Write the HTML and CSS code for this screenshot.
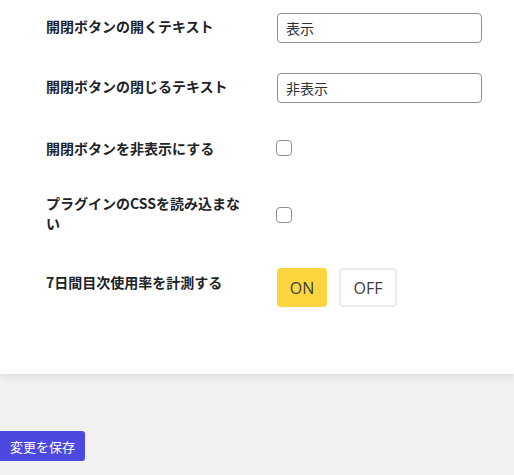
FILE: index.html
```html
<!DOCTYPE html>
<html lang="ja">
<head>
<meta charset="utf-8">
<title>設定</title>
<link rel="stylesheet" href="styles.css">
</head>
<body>
<div class="card">
  <div class="row">
    <div class="label">開閉ボタンの開くテキスト</div>
    <div class="control"><input class="text-input" type="text" value="表示"></div>
  </div>
  <div class="row">
    <div class="label">開閉ボタンの閉じるテキスト</div>
    <div class="control"><input class="text-input" type="text" value="非表示"></div>
  </div>
  <div class="row row-check">
    <div class="label">開閉ボタンを非表示にする</div>
    <div class="control"><input class="check" type="checkbox"></div>
  </div>
  <div class="row row-check row-tall">
    <div class="label">プラグインのCSSを読み込まない</div>
    <div class="control"><input class="check" type="checkbox"></div>
  </div>
  <div class="row row-toggle">
    <div class="label">7日間目次使用率を計測する</div>
    <div class="control toggle">
      <button class="tbtn on" type="button">ON</button>
      <button class="tbtn off" type="button">OFF</button>
    </div>
  </div>
</div>
<div class="footer">
  <button class="save" type="button">変更を保存</button>
</div>
</body>
</html>
```
FILE: styles.css
```css
html, body {
  margin: 0;
  padding: 0;
  background: #f1f1f1;
  font-family: "Noto Sans CJK JP", "Noto Sans", sans-serif;
  color: #1d2327;
}
.card {
  background: #fff;
  padding: 13px 0 67px 46px;
  display: flex;
  flex-direction: column;
  gap: 30px;
  box-shadow: 0 2px 8px rgba(0, 0, 0, 0.10);
}
.row {
  display: grid;
  grid-template-columns: 200px 1fr;
  column-gap: 30px;
  align-items: center;
}
.label {
  font-size: 14px;
  font-weight: 700;
  line-height: 20px;
  margin-top: -4px;
  color: #1d2327;
}
.row-check .label { margin-top: 0; }
.text-input {
  box-sizing: border-box;
  width: 205px;
  height: 30px;
  border: 1px solid #8c8f94;
  border-radius: 4px;
  padding: 0 8px;
  font-family: "Noto Sans CJK JP", sans-serif;
  font-size: 14px;
  color: #2c3338;
  background: #fff;
  display: block;
  margin-left: 1px;
}
.row-check { min-height: 30px; }
.check {
  appearance: none;
  -webkit-appearance: none;
  box-sizing: border-box;
  width: 16px;
  height: 16px;
  margin: 0;
  border: 1px solid #8c8f94;
  border-radius: 4px;
  background: #fff;
  display: block;
}
.row-tall .check { margin-top: 4px; }
.row-toggle {
  align-items: start;
  margin-top: 5px;
}
.row-toggle .label { margin-top: 4px; }
.toggle {
  display: flex;
  gap: 12px;
  margin-left: 1px;
}
.tbtn {
  box-sizing: border-box;
  height: 39px;
  border-radius: 4px;
  font-family: "Open Sans", sans-serif;
  font-size: 16px;
  color: #3c3c3c;
  padding: 0;
  cursor: pointer;
}
.tbtn.on {
  width: 50px;
  background: #fdd63f;
  border: none;
}
.tbtn.off {
  width: 58px;
  background: #fff;
  border: 2px solid #ebebeb;
}
.footer {
  padding-top: 57px;
}
.save {
  display: block;
  box-sizing: border-box;
  width: 85px;
  height: 30px;
  background: #4c48e0;
  color: #fff;
  border: none;
  border-radius: 0 3px 3px 0;
  font-family: "Noto Sans CJK JP", sans-serif;
  font-size: 13px;
  padding: 0;
}
```
